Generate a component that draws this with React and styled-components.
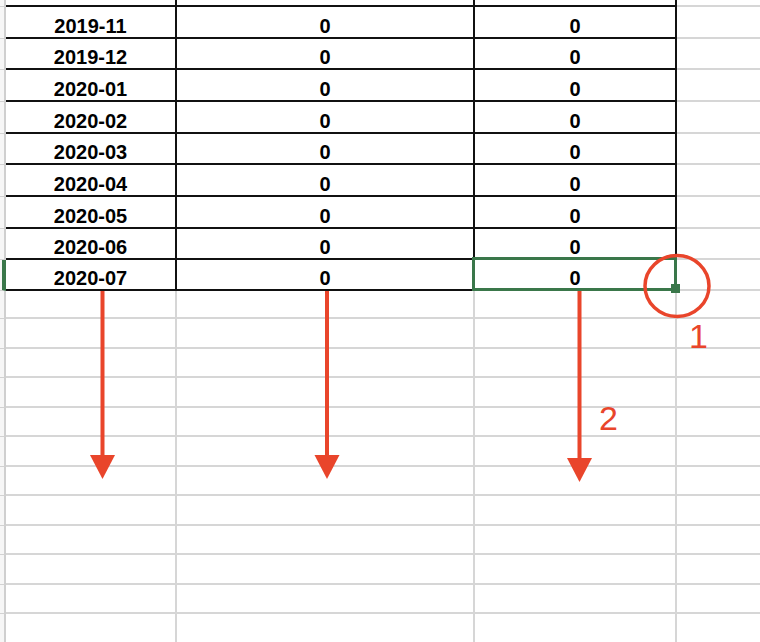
import React from "react";
import styled, { createGlobalStyle } from "styled-components";

const GlobalStyle = createGlobalStyle`
  *, *::before, *::after { box-sizing: border-box; }
  body {
    margin: 0;
    background: #fff;
    font-family: "Liberation Sans", Arial, sans-serif;
  }
`;

const GREEN = "#3a774a";
const RED = "#e9452b";
const GRID = "#d6d6d6";
const INK = "#111";

// rows of the filled part (first one is cut by the scroll position)
const DATA = [
  { month: "2019-10", b: "0", c: "0", h: 7, cut: true },
  { month: "2019-11", b: "0", c: "0", h: 32 },
  { month: "2019-12", b: "0", c: "0", h: 31 },
  { month: "2020-01", b: "0", c: "0", h: 32 },
  { month: "2020-02", b: "0", c: "0", h: 32 },
  { month: "2020-03", b: "0", c: "0", h: 31 },
  { month: "2020-04", b: "0", c: "0", h: 32 },
  { month: "2020-05", b: "0", c: "0", h: 32 },
  { month: "2020-06", b: "0", c: "0", h: 31 },
  { month: "2020-07", b: "0", c: "0", h: 31, selected: true },
];

const EMPTY = [28, 30, 29, 30, 29, 30, 29, 30, 29, 30, 29, 30];

const ARROWS = [
  { x: 102.5, top: 291, head: 455, tip: 479 },
  { x: 327, top: 291, head: 455, tip: 479 },
  { x: 579.5, top: 291, head: 458, tip: 482 },
];

const Viewport = styled.div`
  position: relative;
  width: 760px;
  height: 642px;
  overflow: hidden;
  background: #fff;
`;

const Sheet = styled.div`
  display: flex;
  flex-direction: column;
  width: 860px;
`;

const Row = styled.div`
  display: grid;
  grid-template-columns: 6px 171px 298px 202px 1fr;
  grid-template-rows: ${(p) => p.$h}px;
  height: ${(p) => p.$h}px;
  flex-shrink: 0;
`;

const RowHead = styled.div`
  background: #f6f6f6;
  border-right: ${(p) => (p.$active ? `4px solid ${GREEN}` : "2px solid #cfcfcf")};
  border-bottom: 1px solid #d2d2d2;
`;

const Cell = styled.div`
  position: relative;
  min-height: 0;
  display: flex;
  align-items: flex-end;
  justify-content: center;
  padding-bottom: ${(p) => (p.$cut ? 4 : 1)}px;
  border-bottom: 2px solid ${(p) => (p.$filled ? INK : GRID)};
  border-right: 2px solid ${(p) => (p.$filled ? INK : GRID)};
  color: #000;
  font-size: 20px;
  font-weight: 700;
  line-height: 1;
  white-space: nowrap;
`;

const Clip = styled.div`
  flex: 1;
  align-self: stretch;
  min-height: 0;
  overflow: hidden;
  display: flex;
  align-items: flex-end;
  justify-content: center;
`;

const Value = styled.span`
  display: block;
  flex-shrink: 0;
`;

const Spare = styled.div`
  border-bottom: 2px solid ${GRID};
`;

const Selection = styled.div`
  position: absolute;
  left: -3px;
  top: -3px;
  right: -2px;
  bottom: -2px;
  border: 3px solid ${GREEN};
  pointer-events: none;
  z-index: 2;
`;

const FillHandle = styled.div`
  position: absolute;
  right: -6px;
  bottom: -5px;
  width: 9px;
  height: 9px;
  background: ${GREEN};
`;

const Marks = styled.svg`
  position: absolute;
  inset: 0;
  pointer-events: none;
  z-index: 3;
`;

const StepLabel = styled.text`
  font-family: "Liberation Sans", Arial, sans-serif;
  font-size: 34px;
  font-weight: 400;
  fill: ${RED};
`;

const Arrow = ({ x, top, head, tip }) => (
  <g fill={RED}>
    <rect x={x - 2} y={top} width={4} height={head - top + 2} />
    <polygon points={`${x - 12.5},${head} ${x + 12.5},${head} ${x},${tip}`} />
  </g>
);

const App = () => (
  <>
    <GlobalStyle />
    <Viewport>
      <Sheet>
        {DATA.map((r) => (
          <Row key={r.month} $h={r.h}>
            <RowHead $active={r.selected} />
            <Cell $filled $cut={r.cut}>
              <Clip><Value>{r.month}</Value></Clip>
            </Cell>
            <Cell $filled $cut={r.cut}>
              <Clip><Value>{r.b}</Value></Clip>
            </Cell>
            <Cell $filled $cut={r.cut}>
              <Clip><Value>{r.c}</Value></Clip>
              {r.selected && (
                <Selection>
                  <FillHandle />
                </Selection>
              )}
            </Cell>
            <Spare />
          </Row>
        ))}
        {EMPTY.map((h, i) => (
          <Row key={i} $h={h}>
            <RowHead />
            <Cell />
            <Cell />
            <Cell />
            <Spare />
          </Row>
        ))}
      </Sheet>

      <Marks width="760" height="642" viewBox="0 0 760 642">
        {ARROWS.map((a) => (
          <Arrow key={a.x} {...a} />
        ))}
        <ellipse cx="677" cy="286" rx="32" ry="30.5" fill="none" stroke={RED} strokeWidth="3.5" />
        <StepLabel x="689" y="348">1</StepLabel>
        <StepLabel x="599" y="430">2</StepLabel>
      </Marks>
    </Viewport>
  </>
);

export default App;
